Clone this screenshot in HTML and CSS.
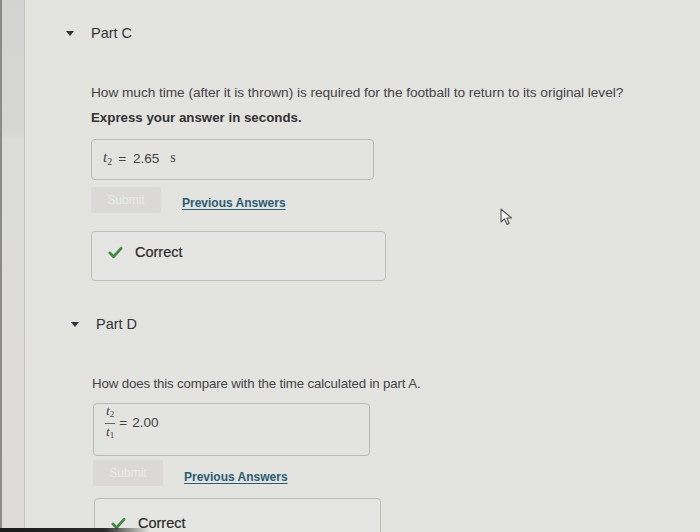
FILE: index.html
```html
<!DOCTYPE html>
<html>
<head>
<meta charset="utf-8">
<link rel="stylesheet" href="styles.css">
</head>
<body>
<div class="page">
  <div class="rail"></div>
  <main class="content">
    <section class="part part-c">
      <div class="part-head"><span class="caret"></span><span class="part-title">Part C</span></div>
      <p class="question q-c">How much time (after it is thrown) is required for the football to return to its original level?</p>
      <p class="instruction">Express your answer in seconds.</p>
      <div class="answer-box box-c">
        <span class="math"><i>t</i><sub>2</sub></span><span class="eq">=</span><span class="num">2.65</span><span class="unit">s</span>
      </div>
      <div class="actions act-c">
        <span class="submit">Submit</span>
        <a class="prev" href="#">Previous Answers</a>
      </div>
      <div class="feedback fb-c">
        <svg class="check" viewBox="0 0 16 14" width="15" height="13"><path d="M2 7.5 L6 11.5 L14 2.5" fill="none" stroke="#3f8a3c" stroke-width="3" stroke-linecap="round" stroke-linejoin="round"/></svg>
        <span class="fb-text">Correct</span>
      </div>
    </section>

    <section class="part part-d">
      <div class="part-head"><span class="caret"></span><span class="part-title">Part D</span></div>
      <p class="question q-d">How does this compare with the time calculated in part A.</p>
      <div class="answer-box box-d">
        <span class="frac"><span class="fn"><i>t</i><sub>2</sub></span><span class="fd"><i>t</i><sub>1</sub></span></span><span class="eq">=</span><span class="num">2.00</span>
      </div>
      <div class="actions act-d">
        <span class="submit">Submit</span>
        <a class="prev" href="#">Previous Answers</a>
      </div>
      <div class="feedback fb-d">
        <svg class="check" viewBox="0 0 16 14" width="15" height="13"><path d="M2 7.5 L6 11.5 L14 2.5" fill="none" stroke="#3f8a3c" stroke-width="3" stroke-linecap="round" stroke-linejoin="round"/></svg>
        <span class="fb-text">Correct</span>
      </div>
    </section>
  </main>
</div>
<svg class="cursor" viewBox="0 0 13 19" width="13" height="19"><path d="M1 1 L1 14 L4.5 10.8 L7 16.5 L9.2 15.5 L6.8 10 L11.5 10 Z" fill="#f2f2f2" stroke="#555" stroke-width="1.1" stroke-linejoin="round"/></svg>
<div class="bezel"></div>
</body>
</html>
```

FILE: styles.css
```css
html, body {
  margin: 0;
  padding: 0;
}
body {
  background: #e3e3e0;
  font-family: "Liberation Sans", Arial, sans-serif;
  color: #3a3a3a;
  width: 700px;
  height: 532px;
  overflow: hidden;
}
.page {
  display: flex;
  min-height: 532px;
}
.rail {
  width: 25px;
  flex: none;
  background: linear-gradient(to bottom, #d3d3d1 0, #d6d6d3 130px, #dcdcd8 140px, #dcdbd7 100%);
  border-left: 2px solid #8a8a88;
  border-right: 1px solid #c2c2be;
  box-sizing: border-box;
}
.content {
  flex: 1;
  padding-left: 66px;
}
.part-head {
  display: flex;
  align-items: center;
  height: 20px;
  margin-left: -24px;
  gap: 17px;
}
.part-c .part-head { margin-top: 23px; margin-left: -25px; }
.part-d .part-head { margin-top: 33px; margin-left: -20px; }
.caret {
  width: 0;
  height: 0;
  border-left: 4px solid transparent;
  border-right: 4px solid transparent;
  border-top: 5px solid #333;
}
.part-title {
  font-size: 14.5px;
  color: #333;
}
.question {
  margin: 40px 0 0;
  line-height: 20px;
  color: #454545;
}
.q-c { font-size: 13.7px; letter-spacing: -0.05px; }
.q-d { font-size: 13.3px; letter-spacing: -0.15px; margin-left: 1px; }
.instruction {
  margin: 5px 0 0;
  font-size: 13.3px;
  font-weight: bold;
  line-height: 20px;
  color: #333;
}
.answer-box {
  display: flex;
  align-items: center;
  box-sizing: border-box;
  border: 1px solid #b9b9b5;
  border-radius: 4px;
  padding-left: 11px;
  font-size: 13.5px;
  color: #444;
}
.box-c {
  margin-top: 11px;
  width: 283px;
  height: 41px;
  padding-bottom: 3px;
}
.box-d {
  margin-top: 9px;
  margin-left: 2px;
  width: 277px;
  height: 53px;
  padding-bottom: 14px;
}
.math, .frac, .unit {
  font-family: "Liberation Serif", "Times New Roman", serif;
}
.math i { font-size: 15px; }
sub { font-size: 10px; vertical-align: -3px; }
.eq { margin: 0 7px 0 6px; }
.box-d .eq { margin: 0 5px 0 4px; }
.unit { margin-left: 11px; font-size: 14px; }
.frac {
  display: inline-flex;
  flex-direction: column;
  align-items: center;
  line-height: 15px;
}
.fn { border-bottom: 1px solid #666; padding: 0 1px 1px; }
.frac i { font-size: 13.5px; }
.frac sub { font-size: 9px; vertical-align: -2px; }
.actions {
  display: flex;
  align-items: center;
  gap: 21px;
}
.act-c { margin-top: 7px; }
.act-d { margin-top: 4px; margin-left: 2px; }
.submit {
  width: 70px;
  height: 26px;
  background: #dad9d7;
  color: #ebebea;
  font-size: 12px;
  display: flex;
  align-items: center;
  justify-content: center;
  border-radius: 2px;
}
.prev {
  color: #2b5d72;
  font-size: 12px;
  font-weight: bold;
  text-decoration: underline;
  text-underline-offset: 2px;
}
.act-d .prev { margin-top: 8px; }
.act-c .prev { margin-top: 6px; }
.feedback {
  display: flex;
  align-items: center;
  gap: 12px;
  box-sizing: border-box;
  border: 1px solid #bcbcb8;
  border-radius: 4px;
  background: #e5e5e3;
  padding-left: 16px;
}
.fb-c {
  margin-top: 18px;
  width: 295px;
  height: 50px;
  padding-bottom: 8px;
}
.fb-d {
  margin-top: 12px;
  margin-left: 3px;
  width: 287px;
  height: 48px;
  padding-top: 2px;
}
.fb-text {
  font-size: 14.5px;
  color: #2a2a2a;
  -webkit-text-stroke: 0.2px #2a2a2a;
}
.cursor {
  position: absolute;
  left: 500px;
  top: 208px;
}
.bezel {
  position: fixed;
  left: 0;
  bottom: 0;
  width: 150px;
  height: 4px;
  background: linear-gradient(to right, #1b1b1b 0, #2a2a2a 70%, rgba(40,40,40,0) 100%);
}
```
